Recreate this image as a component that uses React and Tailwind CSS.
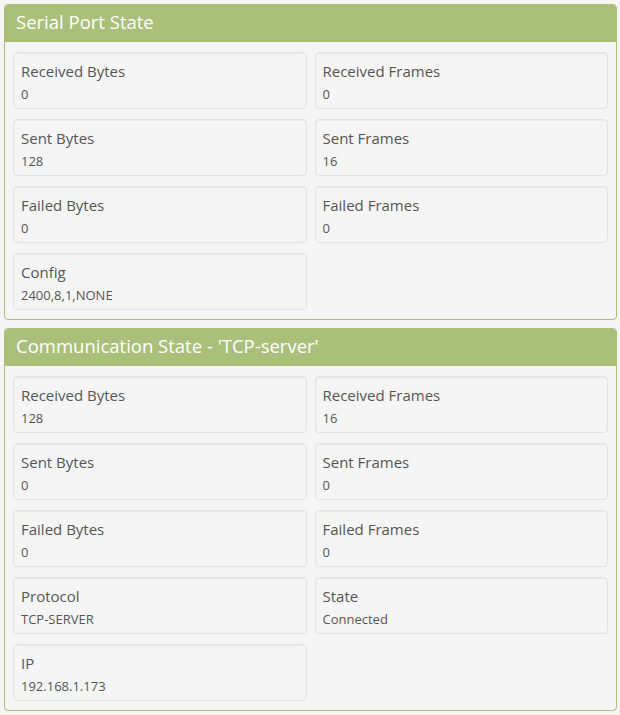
import React from "react";

const font = { fontFamily: '"Open Sans", "Noto Sans", "Liberation Sans", sans-serif' };

function Card({ label, value }) {
  return (
    <div className="h-[57px] rounded-[4px] border border-[#e3e3e3] bg-[#f5f5f5] px-[7px] shadow-[inset_0_1px_1px_rgba(0,0,0,0.05)]">
      <div className="pt-[8px] text-[15px] leading-[21px] text-[#555555]">{label}</div>
      <div className="mt-[2px] text-[13px] leading-[20px] text-[#555555]">{value}</div>
    </div>
  );
}

function Panel({ title, items }) {
  return (
    <div className="rounded-[4px] border border-[#a9bf7a] bg-[#f4f5f4]">
      <div className="h-[37px] rounded-t-[3px] bg-[#a9bf7a] pl-[11px] text-[18.5px] leading-[33px] text-white">
        {title}
      </div>
      <div className="grid grid-cols-2 gap-x-[8px] gap-y-[10px] px-[8px] pt-[10px] pb-[9px]">
        {items.map(([l, v]) => (
          <Card key={l} label={l} value={v} />
        ))}
      </div>
    </div>
  );
}

export default function App() {
  const serial = [
    ["Received Bytes", "0"],
    ["Received Frames", "0"],
    ["Sent Bytes", "128"],
    ["Sent Frames", "16"],
    ["Failed Bytes", "0"],
    ["Failed Frames", "0"],
    ["Config", "2400,8,1,NONE"],
  ];
  const comm = [
    ["Received Bytes", "128"],
    ["Received Frames", "16"],
    ["Sent Bytes", "0"],
    ["Sent Frames", "0"],
    ["Failed Bytes", "0"],
    ["Failed Frames", "0"],
    ["Protocol", "TCP-SERVER"],
    ["State", "Connected"],
    ["IP", "192.168.1.173"],
  ];
  return (
    <div style={font} className="min-h-[715px] w-[620px] bg-[#f4f5f4] pl-[4px] pr-[3px] pt-[4px]">
      <div className="flex flex-col gap-[8px]">
        <Panel title="Serial Port State" items={serial} />
        <Panel title="Communication State - 'TCP-server'" items={comm} />
      </div>
    </div>
  );
}
